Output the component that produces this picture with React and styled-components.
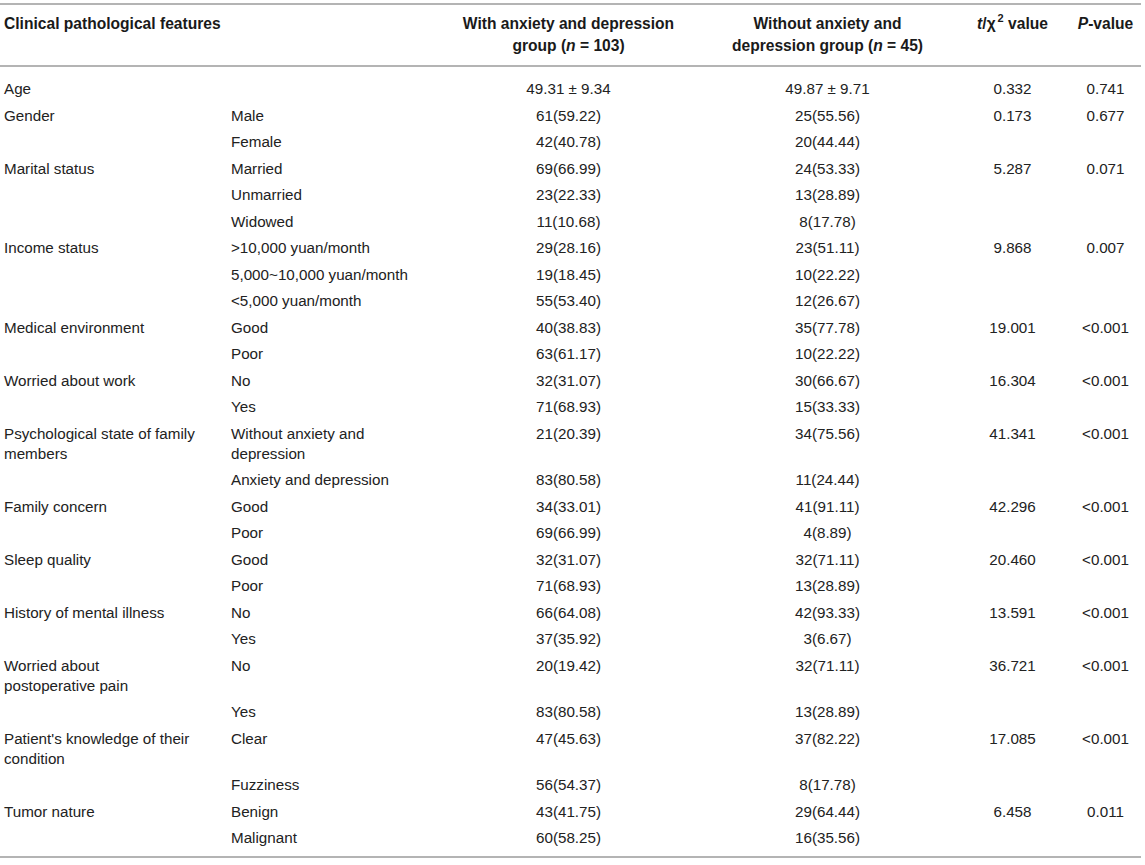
import React from "react";
import styled, { createGlobalStyle } from "styled-components";

const Global = createGlobalStyle`
  html, body { margin: 0; padding: 0; background: #fff; }
  body { font-family: "Liberation Sans", Arial, sans-serif; color: #1f1f1f; }
`;

const Page = styled.div`
  padding-top: 3px;
`;

const Table = styled.table`
  width: 1141px;
  border-collapse: collapse;
  table-layout: fixed;
  border-top: 2px solid #b4b4b4;
  border-bottom: 2px solid #b4b4b4;
`;

const HeadRow = styled.tr`
  border-bottom: 2px solid #b4b4b4;
`;

const HeadCell = styled.th`
  font-weight: bold;
  font-size: 15.6px;
  line-height: 22px;
  padding: 8px 4px;
  text-align: ${(p) => (p.$left ? "left" : "center")};
  vertical-align: top;
  color: #1a1a1a;
  white-space: nowrap;
`;

const Row = styled.tr`
  &:first-child td { padding-top: 12px; }
  &:last-child td { padding-bottom: 8px; }
`;

const Cell = styled.td`
  font-size: 15.2px;
  line-height: 20px;
  padding: 3.25px 4px;
  text-align: ${(p) => (p.$left ? "left" : "center")};
  vertical-align: top;
  color: #222;
  white-space: nowrap;
`;

const Ital = styled.i`
  font-style: italic;
`;

const Chi = styled.span`
  font-style: normal;
`;

const Sup = styled.sup`
  font-size: 11px;
  line-height: 0;
  vertical-align: 7px;
  margin-left: 2px;
`;

const rows = [
  ["Age", "", "49.31 ± 9.34", "49.87 ± 9.71", "0.332", "0.741"],
  ["Gender", "Male", "61(59.22)", "25(55.56)", "0.173", "0.677"],
  ["", "Female", "42(40.78)", "20(44.44)", "", ""],
  ["Marital status", "Married", "69(66.99)", "24(53.33)", "5.287", "0.071"],
  ["", "Unmarried", "23(22.33)", "13(28.89)", "", ""],
  ["", "Widowed", "11(10.68)", "8(17.78)", "", ""],
  ["Income status", ">10,000 yuan/month", "29(28.16)", "23(51.11)", "9.868", "0.007"],
  ["", "5,000~10,000 yuan/month", "19(18.45)", "10(22.22)", "", ""],
  ["", "<5,000 yuan/month", "55(53.40)", "12(26.67)", "", ""],
  ["Medical environment", "Good", "40(38.83)", "35(77.78)", "19.001", "<0.001"],
  ["", "Poor", "63(61.17)", "10(22.22)", "", ""],
  ["Worried about work", "No", "32(31.07)", "30(66.67)", "16.304", "<0.001"],
  ["", "Yes", "71(68.93)", "15(33.33)", "", ""],
  [["Psychological state of family", "members"], ["Without anxiety and", "depression"], "21(20.39)", "34(75.56)", "41.341", "<0.001"],
  ["", "Anxiety and depression", "83(80.58)", "11(24.44)", "", ""],
  ["Family concern", "Good", "34(33.01)", "41(91.11)", "42.296", "<0.001"],
  ["", "Poor", "69(66.99)", "4(8.89)", "", ""],
  ["Sleep quality", "Good", "32(31.07)", "32(71.11)", "20.460", "<0.001"],
  ["", "Poor", "71(68.93)", "13(28.89)", "", ""],
  ["History of mental illness", "No", "66(64.08)", "42(93.33)", "13.591", "<0.001"],
  ["", "Yes", "37(35.92)", "3(6.67)", "", ""],
  [["Worried about", "postoperative pain"], "No", "20(19.42)", "32(71.11)", "36.721", "<0.001"],
  ["", "Yes", "83(80.58)", "13(28.89)", "", ""],
  [["Patient's knowledge of their", "condition"], "Clear", "47(45.63)", "37(82.22)", "17.085", "<0.001"],
  ["", "Fuzziness", "56(54.37)", "8(17.78)", "", ""],
  ["Tumor nature", "Benign", "43(41.75)", "29(64.44)", "6.458", "0.011"],
  ["", "Malignant", "60(58.25)", "16(35.56)", "", ""],
];

const widths = [227, 210, 263, 255, 115, 71];

function Content({ v }) {
  if (Array.isArray(v)) {
    return v.map((s, i) => (
      <React.Fragment key={i}>
        {i > 0 && <br />}
        {s}
      </React.Fragment>
    ));
  }
  return v;
}

export default function App() {
  return (
    <>
      <Global />
      <Page>
        <Table>
          <colgroup>
            {widths.map((w, i) => (
              <col key={i} style={{ width: w }} />
            ))}
          </colgroup>
          <thead>
            <HeadRow>
              <HeadCell $left colSpan={2}>Clinical pathological features</HeadCell>
              <HeadCell>
                With anxiety and depression
                <br />
                group (<Ital>n</Ital> = 103)
              </HeadCell>
              <HeadCell>
                Without anxiety and
                <br />
                depression group (<Ital>n</Ital> = 45)
              </HeadCell>
              <HeadCell>
                <Ital>t</Ital>/<Chi>χ</Chi>
                <Sup>2</Sup> value
              </HeadCell>
              <HeadCell>
                <Ital>P</Ital>-value
              </HeadCell>
            </HeadRow>
          </thead>
          <tbody>
            {rows.map((r, i) => (
              <Row key={i}>
                {r.map((c, j) => (
                  <Cell key={j} $left={j < 2}>
                    <Content v={c} />
                  </Cell>
                ))}
              </Row>
            ))}
          </tbody>
        </Table>
      </Page>
    </>
  );
}
